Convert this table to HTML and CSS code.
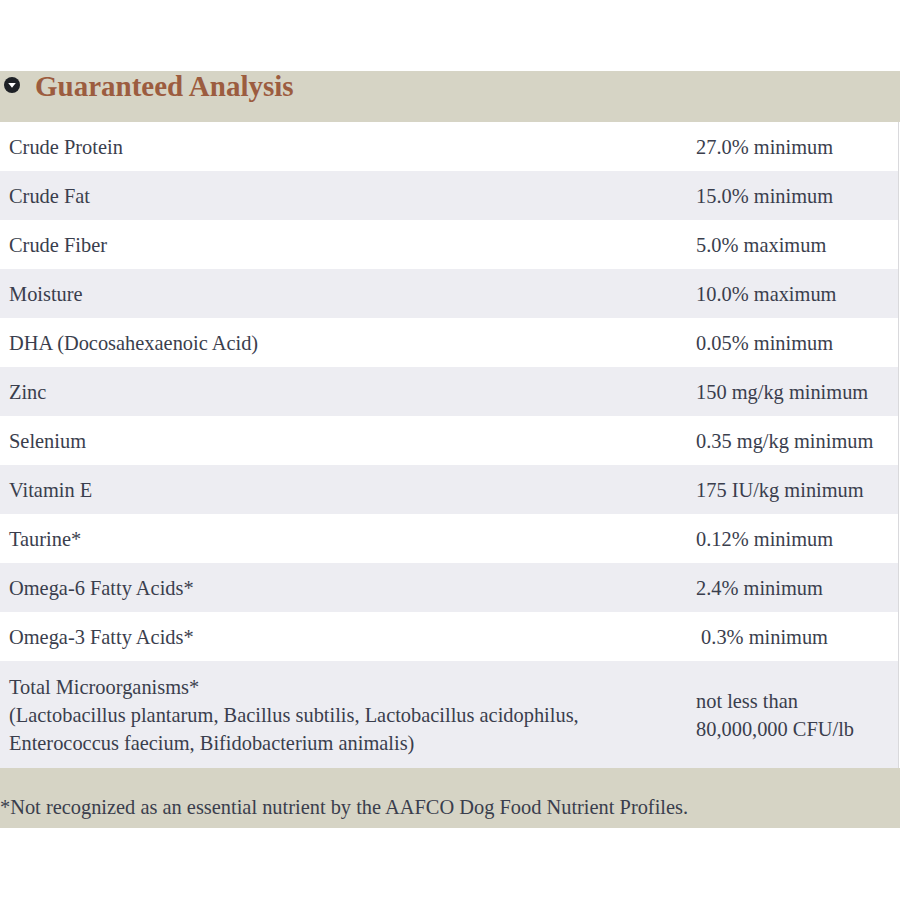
FILE: index.html
```html
<!DOCTYPE html>
<html>
<head>
<meta charset="utf-8">
<link rel="stylesheet" href="styles.css">
</head>
<body>
<div class="panel">
  <div class="head">
    <svg class="toggle" width="16" height="16" viewBox="0 0 16 16"><circle cx="8" cy="8" r="8" fill="#1e2126"/><polygon points="4.2,6 11.8,6 8,10.8" fill="#fff"/></svg>
    <h2 class="title">Guaranteed Analysis</h2>
  </div>
  <div class="rows">
    <div class="row"><div class="lab">Crude Protein</div><div class="val">27.0% minimum</div></div>
    <div class="row alt"><div class="lab">Crude Fat</div><div class="val">15.0% minimum</div></div>
    <div class="row"><div class="lab">Crude Fiber</div><div class="val">5.0% maximum</div></div>
    <div class="row alt"><div class="lab">Moisture</div><div class="val">10.0% maximum</div></div>
    <div class="row"><div class="lab">DHA (Docosahexaenoic Acid)</div><div class="val">0.05% minimum</div></div>
    <div class="row alt"><div class="lab">Zinc</div><div class="val">150 mg/kg minimum</div></div>
    <div class="row"><div class="lab">Selenium</div><div class="val">0.35 mg/kg minimum</div></div>
    <div class="row alt"><div class="lab">Vitamin E</div><div class="val">175 IU/kg minimum</div></div>
    <div class="row"><div class="lab">Taurine*</div><div class="val">0.12% minimum</div></div>
    <div class="row alt"><div class="lab">Omega-6 Fatty Acids*</div><div class="val">2.4% minimum</div></div>
    <div class="row"><div class="lab">Omega-3 Fatty Acids*</div><div class="val">&nbsp;0.3% minimum</div></div>
    <div class="row alt tall"><div class="lab">Total Microorganisms*<br>(Lactobacillus plantarum, Bacillus subtilis, Lactobacillus acidophilus,<br>Enterococcus faecium, Bifidobacterium animalis)</div><div class="val">not less than<br>80,000,000 CFU/lb</div></div>
  </div>
  <div class="foot">*Not recognized as an essential nutrient by the AAFCO Dog Food Nutrient Profiles.</div>
</div>
</body>
</html>
```
FILE: styles.css
```css
html, body {
  margin: 0;
  padding: 0;
  background: #ffffff;
}
body {
  font-family: "Liberation Serif", "Times New Roman", serif;
  color: #3a3e4d;
}
.panel {
  padding-top: 71px;
  width: 900px;
}
.head {
  height: 51px;
  background: #d6d4c5;
  display: flex;
  align-items: flex-start;
  box-sizing: border-box;
  padding-left: 4px;
  padding-top: 5px;
}
.toggle {
  margin-top: 1px;
  flex: none;
}
.title {
  margin: 0 0 0 15px;
  font-size: 29px;
  line-height: 20px;
  font-weight: bold;
  color: #9c5c3f;
  padding-top: 0;
}
.rows {
  width: 898px;
  border-right: 1px solid #d9d9dc;
}
.row {
  display: grid;
  grid-template-columns: 696px 1fr;
  height: 49px;
  align-items: center;
  font-size: 20.4px;
  line-height: 28px;
  background: #ffffff;
}
.row.alt {
  background: #ededf2;
}
.row.tall {
  height: 107px;
}
.lab {
  padding-left: 9px;
}
.foot {
  height: 60px;
  box-sizing: border-box;
  background: #d6d4c5;
  padding-top: 25px;
  font-size: 20.4px;
  line-height: 28px;
}
```
